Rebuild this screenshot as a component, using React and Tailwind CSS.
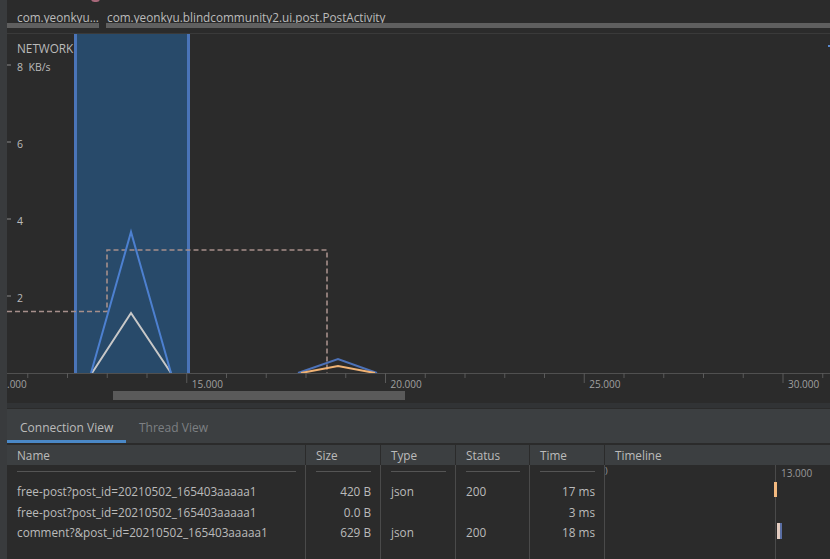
import React from "react";

const FONT = { fontFamily: '"Open Sans", "Noto Sans", sans-serif' };

function Chart() {
  const ticks = [];
  for (let k = 0; k < 22; k++) {
    const x = -19 + 39.75 * k;
    if (x < 0 || x > 823) continue;
    const major = k % 5 === 0;
    ticks.push(
      <line key={k} x1={x} x2={x} y1={339} y2={major ? 349 : 344} stroke="#5a5a5a" strokeWidth="1" />
    );
  }
  const labels = [
    { x: 0, t: ".000" },
    { x: -19 + 39.75 * 5 + 5, t: "15.000" },
    { x: -19 + 39.75 * 10 + 5, t: "20.000" },
    { x: -19 + 39.75 * 15 + 5, t: "25.000" },
    { x: -19 + 39.75 * 20 + 5, t: "30.000" },
  ];
  return (
    <svg width="823" height="369" className="block" style={FONT}>
      <rect x="67" y="0" width="116" height="339" fill="#284a6a" />
      <line x1="68.5" x2="68.5" y1="0" y2="339" stroke="#4a74b8" strokeWidth="3" />
      <line x1="181.5" x2="181.5" y1="0" y2="339" stroke="#4a74b8" strokeWidth="3" />
      <text x="10" y="19" fontSize="11.75" fill="#bbbbbb">NETWORK</text>
      {[
        { y: 31, t: "8  KB/s" },
        { y: 108, t: "6" },
        { y: 185, t: "4" },
        { y: 262, t: "2" },
      ].map((a) => (
        <g key={a.y}>
          <line x1="0" x2="4" y1={a.y} y2={a.y} stroke="#8a8a8a" strokeWidth="1" />
          <text x="10" y={a.y + 6} fontSize="10.5" fill="#bbbbbb" style={{ whiteSpace: "pre" }}>
            {a.t}
          </text>
        </g>
      ))}
      <path d="M0 277.5 H100 V216 H320 V339" fill="none" stroke="#a68f8b" strokeWidth="1.6" strokeDasharray="5 3" />
      <polyline points="85,339 124,279 164,339" fill="none" stroke="#c8c8c8" strokeWidth="2" />
      <polyline points="84,339 124,198 164,339" fill="none" stroke="#4d80d0" strokeWidth="2" />
      <polyline points="291,339 331,325 370,339" fill="none" stroke="#4d72b8" strokeWidth="2" />
      <polyline points="294,339 331,332 368,339" fill="none" stroke="#f0b274" strokeWidth="2" />
      <line x1="0" x2="823" y1="339.5" y2="339.5" stroke="#505050" strokeWidth="1" />
      {ticks}
      {labels.map((l) => (
        <text key={l.t} x={l.x} y="354" fontSize="10" fill="#a0a0a0">
          {l.t}
        </text>
      ))}
      <rect x="106" y="357" width="292" height="9" fill="#5a5a5a" />
      <rect x="821" y="11" width="2" height="2" fill="#5a8ad0" />
    </svg>
  );
}

const cols = [
  { name: "Name", w: "w-[298px]" },
  { name: "Size", w: "w-[75px]" },
  { name: "Type", w: "w-[75px]" },
  { name: "Status", w: "w-[74px]" },
  { name: "Time", w: "w-[75px]" },
];

const rows = [
  { name: "free-post?post_id=20210502_165403aaaaa1", size: "420 B", type: "json", status: "200", time: "17 ms" },
  { name: "free-post?post_id=20210502_165403aaaaa1", size: "0.0 B", type: "", status: "", time: "3 ms" },
  { name: "comment?&post_id=20210502_165403aaaaa1", size: "629 B", type: "json", status: "200", time: "18 ms" },
];

function Cell({ right, children }) {
  return (
    <div className={`w-full h-[20.5px] flex items-center pl-[10px] pr-[9px] ${right ? "justify-end" : ""}`}>
      <span className="whitespace-nowrap">{children}</span>
    </div>
  );
}

function Col({ w, border, right, values }) {
  return (
    <div className={`${w} flex flex-col ${border ? "border-l border-[#4a4a4a]" : ""}`}>
      <div className="h-[17px] pt-[6px] pl-[10px] pr-[9px]">
        <div className="h-px bg-[#555555]" />
      </div>
      {values.map((v, i) => (
        <Cell key={i} right={right}>
          {v}
        </Cell>
      ))}
    </div>
  );
}

export default function App() {
  return (
    <div className="w-[830px] h-[559px] overflow-hidden bg-[#2b2b2b] flex text-[#bbbbbb] text-[11.75px]" style={FONT}>
      <div className="w-[7px] h-full bg-[#393b3d] shrink-0" />
      <div className="flex-1 flex flex-col min-w-0 relative">
        <div className="absolute left-[84px] -top-[5px] w-[9px] h-[7px] rounded-full bg-[#a8687a]" />
        {/* top labels */}
        <div className="h-[34px] border-b border-[#3a3a3a] flex gap-[7px] pt-[11px] shrink-0">
          <div className="w-[92px] flex flex-col">
            <span className="leading-[12px] pl-[10px] whitespace-nowrap">com.yeonkyu...</span>
            <div className="h-[5px] bg-[#5f5f5f]" />
          </div>
          <div className="flex-1 flex flex-col">
            <span className="leading-[12px] pl-[1px] whitespace-nowrap">com.yeonkyu.blindcommunity2.ui.post.PostActivity</span>
            <div className="h-[5px] bg-[#5f5f5f]" />
          </div>
        </div>
        {/* chart */}
        <div className="h-[369px] shrink-0">
          <Chart />
        </div>
        <div className="h-[5px] bg-[#313335] border-b border-[#2b2b2b] box-content shrink-0" />
        {/* tabs */}
        <div className="h-[34px] bg-[#3c3f41] flex items-stretch shrink-0 text-[12px]">
          <div className="w-[119px] flex flex-col">
            <div className="flex-1 flex items-center pl-[13px] pt-[6px] whitespace-nowrap">Connection View</div>
            <div className="h-[3px] bg-[#4a88c7]" />
          </div>
          <div className="flex items-center pl-[13px] pt-[3px] text-[#7d8083] whitespace-nowrap">Thread View</div>
        </div>
        <div className="h-[2px] bg-[#2b2b2b] shrink-0" />
        {/* header */}
        <div className="h-[20px] bg-[#3c3f41] flex shrink-0">
          {cols.map((c, i) => (
            <div
              key={c.name}
              className={`${c.w} flex items-center pl-[10px] pt-[2px] ${i > 0 ? "border-l border-[#2b2b2b]" : ""}`}
            >
              {c.name}
            </div>
          ))}
          <div className="flex-1 flex items-center pl-[10px] pt-[2px] border-l border-[#2b2b2b]">Timeline</div>
        </div>
        {/* body */}
        <div className="flex-1 flex relative">
          <Col w="w-[298px]" values={rows.map((r) => r.name)} />
          <Col w="w-[75px]" border right values={rows.map((r) => r.size)} />
          <Col w="w-[75px]" border values={rows.map((r) => r.type)} />
          <Col w="w-[74px]" border values={rows.map((r) => r.status)} />
          <Col w="w-[75px]" border right values={rows.map((r) => r.time)} />
          <div className="flex-1 border-l border-[#4a4a4a] relative overflow-hidden">
            <span className="absolute left-0 top-0 text-[9px] leading-[12px] text-[#999999]">)</span>
            <div className="absolute left-[170px] top-0 bottom-0 w-px bg-[#4a4a4a]" />
            <span className="absolute left-[176px] top-[2px] text-[10px] leading-[12px] text-[#999999]">13.000</span>
            <div className="absolute left-[169px] top-[17px] w-[3px] h-[15px] bg-[#f3b97f]" />
            <div className="absolute left-[172px] top-[58px] w-[3px] h-[16px] bg-[#e2cbc0]" />
            <div className="absolute left-[175px] top-[58px] w-[2px] h-[16px] bg-[#5a6ea3]" />
          </div>
        </div>
      </div>
    </div>
  );
}
